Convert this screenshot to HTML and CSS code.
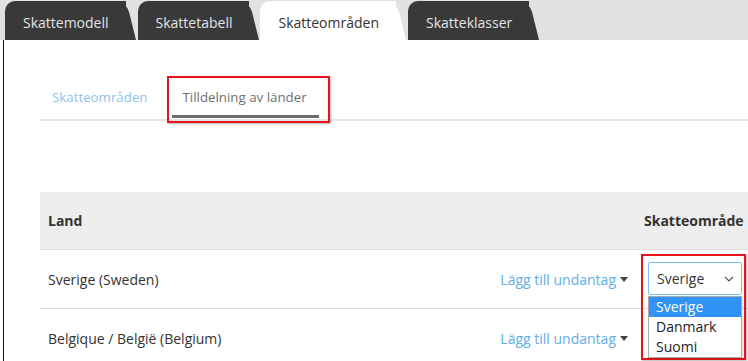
FILE: index.html
```html
<!DOCTYPE html>
<html lang="sv">
<head>
<meta charset="utf-8">
<title>Skatteområden</title>
<link rel="stylesheet" href="styles.css">
</head>
<body>
<div class="app">
  <nav class="tabs">
    <div class="tab">Skattemodell</div>
    <div class="tab">Skattetabell</div>
    <div class="tab active">Skatteområden</div>
    <div class="tab">Skatteklasser</div>
  </nav>
  <main class="content">
    <div class="subtabs">
      <div class="subtab">Skatteområden</div>
      <div class="subtab active">Tilldelning av länder<span class="annot annot-sub"></span></div>
    </div>
    <div class="table">
      <div class="row head">
        <div class="c1">Land</div>
        <div class="c2"></div>
        <div class="c3">Skatteområde</div>
      </div>
      <div class="row">
        <div class="c1">Sverige (Sweden)</div>
        <div class="c2"><a class="link">Lägg till undantag</a><span class="caret"></span></div>
        <div class="c3">
          <div class="select">
            <span>Sverige</span>
            <svg class="chev" width="10" height="6" viewBox="0 0 10 6"><path d="M1 1 L5 5 L9 1" fill="none" stroke="#555" stroke-width="1.2"/></svg>
            <ul class="listbox">
              <li class="sel">Sverige</li>
              <li>Danmark</li>
              <li>Suomi</li>
            </ul>
          </div>
          <span class="annot annot-select"></span>
        </div>
      </div>
      <div class="row">
        <div class="c1">Belgique / België (Belgium)</div>
        <div class="c2"><a class="link">Lägg till undantag</a><span class="caret"></span></div>
        <div class="c3"></div>
      </div>
    </div>
  </main>
</div>
</body>
</html>
```
FILE: styles.css
```css
* { box-sizing: border-box; }
html, body { margin: 0; padding: 0; }
body {
  width: 748px;
  height: 361px;
  overflow: hidden;
  background: #fff;
  font-family: "Open Sans", "Liberation Sans", Arial, sans-serif;
  color: #333;
}
.app { width: 748px; height: 361px; display: flex; flex-direction: column; }

.tabs {
  height: 40px;
  background: #e1e1e1;
  display: flex;
  align-items: flex-end;
  padding-left: 5px;
  flex: none;
}
.tab {
  position: relative;
  z-index: 0;
  height: 39px;
  display: flex;
  align-items: center;
  padding: 3px 17px 0 18px;
  margin-right: 12px;
  background: #393939;
  color: #e4e4e4;
  font-size: 14px;
  border-radius: 10px 0 0 0;
}
.tab::after {
  content: "";
  position: absolute;
  z-index: -1;
  top: 0;
  bottom: 0;
  right: -10px;
  width: 26px;
  background: inherit;
  border-radius: 0 11px 0 0;
  transform: skewX(14deg);
  transform-origin: bottom right;
}
.tab:nth-child(2) { margin-right: 11px; }
.tab.active {
  background: #fff;
  color: #333;
  padding-left: 18px;
  padding-right: 17px;
  margin-right: 12px;
}

.content {
  flex: 1;
  margin-left: 3px;
  border-left: 1px solid #111;
  padding-left: 36px;
}

.subtabs {
  display: flex;
  gap: 12px;
  padding-top: 47px;
  border-bottom: 2px solid #e6e6e6;
}
.subtab {
  position: relative;
  padding: 0 12px 8px;
  font-size: 13.3px;
  line-height: 20px;
  color: #8fc3ee;
  border-bottom: 3px solid transparent;
  margin-bottom: 1px;
}
.subtab.active {
  color: #6f6f6f;
  border-bottom-color: #6d6d6d;
  padding-left: 11px;
}

.annot {
  position: absolute;
  border: 2px solid #e8141b;
  box-shadow: 1px 1px 2px rgba(0,0,0,0.3);
  pointer-events: none;
}
.annot-sub { left: -5px; top: -11px; right: -11px; bottom: -8px; }
.annot-select { left: 0; top: 4px; width: 105px; height: 106px; }

.table { margin-top: 71px; }
.row {
  display: grid;
  grid-template-columns: 1fr auto 107px;
  height: 59px;
  border-bottom: 1px solid #dedede;
  font-size: 14px;
  align-items: center;
}
.row.head {
  height: 58px;
  background: #eeeeee;
  font-weight: 700;
}
.c1 { padding-left: 8px; }
.c2 { display: flex; align-items: center; padding-right: 13px; }
.c3 { position: relative; height: 100%; display: flex; align-items: center; }
.head .c3 { padding-left: 3px; }
.link { color: #62aee8; text-decoration: none; }
.caret {
  margin-left: 4px;
  width: 0; height: 0;
  border-left: 4px solid transparent;
  border-right: 4px solid transparent;
  border-top: 5px solid #444;
}
.select {
  position: relative;
  margin-left: 7px;
  margin-top: -2px;
  width: 94px;
  height: 33px;
  border: 1px solid #86bdf0;
  border-radius: 2px;
  display: flex;
  align-items: center;
  justify-content: space-between;
  padding: 0 7px 0 8px;
  color: #333;
}
.chev { margin-top: 1px; }
.listbox {
  position: absolute;
  left: -1px;
  top: 33px;
  width: 94px;
  margin: 0;
  padding: 0;
  list-style: none;
  background: #fff;
  border: 1px solid #a9a9a9;
  box-shadow: 1px 1px 2px rgba(0,0,0,0.15);
  z-index: 2;
}
.listbox li {
  height: 20px;
  line-height: 20px;
  padding-left: 7px;
  font-size: 14px;
  color: #222;
}
.listbox li.sel { background: #3094f7; color: #fff; }
```
